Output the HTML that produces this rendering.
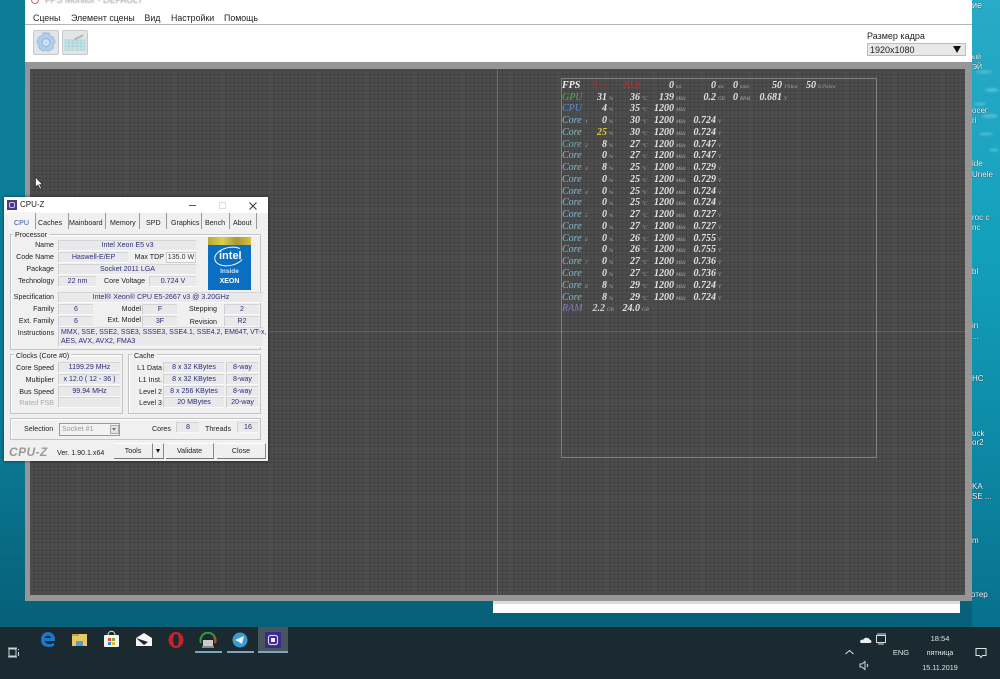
<!DOCTYPE html>
<html lang="ru"><head><meta charset="utf-8"><title>FPS Monitor</title>
<style>
*{box-sizing:border-box}
html,body{margin:0;padding:0}
body{width:1000px;height:679px;position:relative;overflow:hidden;font-family:"Liberation Sans","Noto Sans CJK SC",sans-serif;background:linear-gradient(180deg,#0d7d97 0%,#0b7f9a 60%,#075f78 92%)}
div,span{position:absolute;white-space:nowrap}
#rstrip{left:972px;top:0;width:28px;height:627px;background:linear-gradient(180deg,#27abc6 0,#1fa6c2 20%,#12a0bb 40%,#0d8aa6 70%,#08708c 100%)}
.dt{color:#fff;font-size:9px;left:972px;line-height:10px;text-shadow:0 0 1px #000;filter:blur(.3px)}
#win{left:25px;top:0;width:947px;height:69px;background:#fff}
#gray{left:25px;top:62px;width:947px;height:539px;background:#969696}
#canvas{left:30px;top:69px;width:935px;height:526px;background-color:#4d4d4d;background-image:
repeating-linear-gradient(90deg,rgba(255,255,255,.04) 0 1px,transparent 1px 48px),
repeating-linear-gradient(0deg,rgba(255,255,255,.035) 0 1px,transparent 1px 48px),
repeating-linear-gradient(90deg,rgba(0,0,0,.1) 0 1px,transparent 1px 4px),
repeating-linear-gradient(0deg,rgba(0,0,0,.1) 0 1px,transparent 1px 4px)}
.menu{top:13px;font-size:8.8px;color:#222;line-height:11px;filter:blur(.2px)}
.ol{left:0;top:0;filter:blur(.35px);font-family:"Liberation Serif",serif;font-style:italic;font-weight:bold;font-size:10px;line-height:12px;color:#e2e2e2}
.r{left:0;width:1000px;height:12px}
.r span{top:0}
.r i{font-size:5px;color:#aaa;font-style:italic;font-weight:normal;letter-spacing:0;margin-left:1px;vertical-align:baseline}
.a{left:562px;color:#86bad0;font-weight:normal}
.p{right:393px}.t{right:360px}.f{right:326px}.v{right:284px}
.pu{left:608px}.tu{left:641px}.fu{left:675px}.vu{left:717px}
#cz{left:4px;top:197px;width:264px;height:264px;background:#f0f0f0;box-shadow:0 0 3px rgba(0,0,0,.6);font-size:7.1px;color:#222;line-height:10px;filter:blur(.28px)}
#cz .tb{left:0;top:0;width:264px;height:16px;background:#fff}
.L{text-align:right}
.F{background:#e9e9ec;border-top:1px solid #d5d5d8;border-left:1px solid #cfcfd2;border-bottom:1px solid #fafafa;color:#2c2c78;text-align:center;height:11px;line-height:9px}
.G{border:1px solid #c4c4c4;box-shadow:inset 1px 1px 0 #fff}
.GL{background:#f0f0f0;padding:0 2px;line-height:9px}
.sep{top:16px;width:1px;height:16px;background:#9a9a9a}
.B{background:#efefef;border-bottom:1px solid #777;border-right:1px solid #888;border-top:1px solid #fff;top:246px;height:16px;text-align:center;line-height:14px}
.tk{filter:blur(.25px)}
.tray{color:#dfe5e6;font-size:7.5px;line-height:9px;text-align:center;filter:blur(.25px)}
</style></head><body>
<div id="rstrip"></div>
<svg style="position:absolute;left:972px;top:60px;filter:blur(1px)" width="28" height="110"><g fill="#7fd8e8" opacity=".5"><ellipse cx="12" cy="12" rx="8" ry="1.5"/><ellipse cx="20" cy="30" rx="7" ry="2"/><ellipse cx="8" cy="44" rx="6" ry="1.5"/><ellipse cx="18" cy="56" rx="8" ry="2"/><ellipse cx="14" cy="74" rx="7" ry="1.5"/><ellipse cx="22" cy="90" rx="5" ry="1.5"/></g></svg>
<div class="dt" style="top:0">ие</div>
<div class="dt" style="top:53px;font-size:7px">ый</div>
<div class="dt" style="top:63px;font-size:7px">ЭЙ</div>
<div class="dt" style="top:106px;font-size:8px">осег</div>
<div class="dt" style="top:116px;font-size:8px">ri</div>
<div class="dt" style="top:159px;font-size:8px">ide</div>
<div class="dt" style="top:170px;font-size:8px">Unele</div>
<div class="dt" style="top:213px;font-size:8px">roc c</div>
<div class="dt" style="top:223px;font-size:8px">nc</div>
<div class="dt" style="top:267px;font-size:8px">bl</div>
<div class="dt" style="top:321px;font-size:8px">in</div>
<div class="dt" style="top:332px;font-size:8px">...</div>
<div class="dt" style="top:374px;font-size:8px">HC</div>
<div class="dt" style="top:429px;font-size:8px">uck</div>
<div class="dt" style="top:438px;font-size:8px">or2</div>
<div class="dt" style="top:482px;font-size:8px">KA</div>
<div class="dt" style="top:492px;font-size:8px">SE ...</div>
<div class="dt" style="top:536px;font-size:8px">m</div>
<div class="dt" style="top:590px;left:971px;font-size:8px">отер</div>

<div style="left:493px;top:601px;width:467px;height:12px;background:#fff"></div>
<div style="left:493px;top:601px;width:467px;height:3px;background:#dcdcdc"></div>

<div id="win"></div>
<div style="left:45px;top:-5px;font-size:9px;color:#999;line-height:11px;filter:blur(.4px)">FPS Monitor - DEFAULT</div>
<div style="left:31px;top:-4px;width:8px;height:8px;border-radius:50%;border:1.5px solid #c66"></div>
<div class="menu" style="left:33px">Сцены</div>
<div class="menu" style="left:71px">Элемент сцены</div>
<div class="menu" style="left:144.500px">Вид</div>
<div class="menu" style="left:171px">Настройки</div>
<div class="menu" style="left:224px">Помощь</div>
<div style="left:25px;top:24px;width:947px;height:1px;background:#b5b5b5"></div>
<div style="left:33px;top:30px;width:26px;height:25px;background:#e3e6e8;border:1px solid #c6c9cc;border-radius:2px"></div>
<svg style="position:absolute;left:36px;top:32px;filter:blur(.4px)" width="20" height="21" viewBox="0 0 20 21"><path d="M7 1h6l1 3 3 1 2 5-2 3 0 3-4 3-3-1-3 1-4-3 0-3-2-3 2-5 3-1z" fill="#b4d0f0" stroke="#8fb3dd"/><circle cx="10" cy="10.500" r="4" fill="#dbe9f8" stroke="#7fa4d0"/><circle cx="10" cy="10.500" r="1.300" fill="#a9c9ee"/></svg>
<div style="left:62px;top:30px;width:26px;height:25px;background:#e3e6e8;border:1px solid #c6c9cc;border-radius:2px"></div>
<svg style="position:absolute;left:64px;top:34px;filter:blur(.4px)" width="22" height="17" viewBox="0 0 22 17"><rect x="1" y="6" width="20" height="10" fill="#c8e8ea" stroke="#a8d2d4"/><path d="M2 9h18M2 12h18M5 6v10M9 6v10M13 6v10M17 6v10" stroke="#9cc8cc" stroke-width=".7"/><path d="M11 6C12 3 16 4 19 1" stroke="#888" fill="none"/></svg>
<div style="left:867px;top:31px;font-size:9px;color:#222;line-height:11px;filter:blur(.2px)">Размер кадра</div>
<div style="left:867px;top:43px;width:99px;height:13px;background:#e8e8e8;border:1px solid #bdbdbd"></div>
<div style="left:870px;top:44px;font-size:9px;color:#222;line-height:12px;filter:blur(.2px)">1920x1080</div>
<div style="left:953px;top:46px;width:0;height:0;border-left:4.500px solid transparent;border-right:4.500px solid transparent;border-top:7px solid #111"></div>

<div id="gray"></div>
<div id="canvas"></div>
<div style="left:497px;top:69px;width:1px;height:526px;background:#6e6e6e"></div>
<div style="left:30px;top:331px;width:935px;height:1px;background:#626262"></div>
<div style="left:561px;top:78px;width:316px;height:380px;border:1px solid #808080"></div>

<div class="ol">
<div class="r" style="top:79.500px"><span style="left:562px;color:#eee">FPS</span><span class="p" style="color:#b02828">0<i style="color:#932">FPS</i></span><span class="t" style="color:#b03030">20.0<i style="color:#932;position:absolute;left:100%;top:0">ms</i></span><span class="f">0</span><span class="fu"><i>ms</i></span><span class="v">0</span><span class="vu"><i>ms</i></span><span style="right:262px">0</span><span style="left:739px"><i>msec</i></span><span style="right:218px">50</span><span style="left:783px"><i>1%low</i></span><span style="right:184px">50</span><span style="left:817px"><i>0.1%low</i></span></div>
<div class="r" style="top:91.500px"><span class="a" style="color:#4cb050">GPU</span><span class="p">31</span><span class="pu"><i>%</i></span><span class="t">36</span><span class="tu"><i>°C</i></span><span class="f">139</span><span class="fu"><i>MHz</i></span><span class="v">0.2</span><span class="vu"><i>GB</i></span><span style="right:262px">0</span><span style="left:739px"><i>RPM</i></span><span style="right:218px">0.681</span><span style="left:783px"><i>V</i></span></div>
<div class="r" style="top:103px"><span class="a" style="color:#5a8ed0">CPU</span><span class="p">4</span><span class="pu"><i>%</i></span><span class="t">35</span><span class="tu"><i>°C</i></span><span class="f">1200</span><span class="fu"><i>MHz</i></span></div>
<div class="r" style="top:115px"><span class="a">Core <i>1</i></span><span class="p">0</span><span class="pu"><i>%</i></span><span class="t">30</span><span class="tu"><i>°C</i></span><span class="f">1200</span><span class="fu"><i>MHz</i></span><span class="v">0.724</span><span class="vu"><i>V</i></span></div>
<div class="r" style="top:127px"><span class="a" style="color:#8ac0b8">Core</span><span class="p" style="color:#d8c838">25</span><span class="pu"><i>%</i></span><span class="t">30</span><span class="tu"><i>°C</i></span><span class="f">1200</span><span class="fu"><i>MHz</i></span><span class="v">0.724</span><span class="vu"><i>V</i></span></div>
<div class="r" style="top:138.500px"><span class="a" style="color:#6cb0a8">Core <i>2</i></span><span class="p">8</span><span class="pu"><i>%</i></span><span class="t">27</span><span class="tu"><i>°C</i></span><span class="f">1200</span><span class="fu"><i>MHz</i></span><span class="v">0.747</span><span class="vu"><i>V</i></span></div>
<div class="r" style="top:150px"><span class="a">Core</span><span class="p">0</span><span class="pu"><i>%</i></span><span class="t">27</span><span class="tu"><i>°C</i></span><span class="f">1200</span><span class="fu"><i>MHz</i></span><span class="v">0.747</span><span class="vu"><i>V</i></span></div>
<div class="r" style="top:162px"><span class="a">Core <i>3</i></span><span class="p">8</span><span class="pu"><i>%</i></span><span class="t">25</span><span class="tu"><i>°C</i></span><span class="f">1200</span><span class="fu"><i>MHz</i></span><span class="v">0.729</span><span class="vu"><i>V</i></span></div>
<div class="r" style="top:173.500px"><span class="a">Core</span><span class="p">0</span><span class="pu"><i>%</i></span><span class="t">25</span><span class="tu"><i>°C</i></span><span class="f">1200</span><span class="fu"><i>MHz</i></span><span class="v">0.729</span><span class="vu"><i>V</i></span></div>
<div class="r" style="top:185.500px"><span class="a">Core <i>4</i></span><span class="p">0</span><span class="pu"><i>%</i></span><span class="t">25</span><span class="tu"><i>°C</i></span><span class="f">1200</span><span class="fu"><i>MHz</i></span><span class="v">0.724</span><span class="vu"><i>V</i></span></div>
<div class="r" style="top:197px"><span class="a">Core</span><span class="p">0</span><span class="pu"><i>%</i></span><span class="t">25</span><span class="tu"><i>°C</i></span><span class="f">1200</span><span class="fu"><i>MHz</i></span><span class="v">0.724</span><span class="vu"><i>V</i></span></div>
<div class="r" style="top:209px"><span class="a">Core <i>5</i></span><span class="p">0</span><span class="pu"><i>%</i></span><span class="t">27</span><span class="tu"><i>°C</i></span><span class="f">1200</span><span class="fu"><i>MHz</i></span><span class="v">0.727</span><span class="vu"><i>V</i></span></div>
<div class="r" style="top:220.500px"><span class="a">Core</span><span class="p">0</span><span class="pu"><i>%</i></span><span class="t">27</span><span class="tu"><i>°C</i></span><span class="f">1200</span><span class="fu"><i>MHz</i></span><span class="v">0.727</span><span class="vu"><i>V</i></span></div>
<div class="r" style="top:232.500px"><span class="a">Core <i>6</i></span><span class="p">0</span><span class="pu"><i>%</i></span><span class="t">26</span><span class="tu"><i>°C</i></span><span class="f">1200</span><span class="fu"><i>MHz</i></span><span class="v">0.755</span><span class="vu"><i>V</i></span></div>
<div class="r" style="top:244px"><span class="a">Core</span><span class="p">0</span><span class="pu"><i>%</i></span><span class="t">26</span><span class="tu"><i>°C</i></span><span class="f">1200</span><span class="fu"><i>MHz</i></span><span class="v">0.755</span><span class="vu"><i>V</i></span></div>
<div class="r" style="top:256px"><span class="a">Core <i>7</i></span><span class="p">0</span><span class="pu"><i>%</i></span><span class="t">27</span><span class="tu"><i>°C</i></span><span class="f">1200</span><span class="fu"><i>MHz</i></span><span class="v">0.736</span><span class="vu"><i>V</i></span></div>
<div class="r" style="top:267.500px"><span class="a">Core</span><span class="p">0</span><span class="pu"><i>%</i></span><span class="t">27</span><span class="tu"><i>°C</i></span><span class="f">1200</span><span class="fu"><i>MHz</i></span><span class="v">0.736</span><span class="vu"><i>V</i></span></div>
<div class="r" style="top:279.500px"><span class="a">Core <i>8</i></span><span class="p">8</span><span class="pu"><i>%</i></span><span class="t">29</span><span class="tu"><i>°C</i></span><span class="f">1200</span><span class="fu"><i>MHz</i></span><span class="v">0.724</span><span class="vu"><i>V</i></span></div>
<div class="r" style="top:291.500px"><span class="a">Core</span><span class="p">8</span><span class="pu"><i>%</i></span><span class="t">29</span><span class="tu"><i>°C</i></span><span class="f">1200</span><span class="fu"><i>MHz</i></span><span class="v">0.724</span><span class="vu"><i>V</i></span></div>
<div class="r" style="top:303px"><span class="a" style="color:#8878b8">RAM</span><span style="right:395px;color:#ccc">2.2</span><span style="left:606px"><i>GB</i></span><span class="t">24.0</span><span class="tu"><i>GB</i></span></div>
</div>

<svg style="position:absolute;left:34px;top:176px" width="11" height="14" viewBox="0 0 11 14"><path d="M1.500 1v10l2.500-2 2 4 1.500-.8-2-3.700h3z" fill="#fff" stroke="#222" stroke-width=".6"/></svg>

<div id="cz">
<div class="tb"></div>
<div style="left:3px;top:3px;width:10px;height:10px;background:#4a3a8c"></div>
<div style="left:5px;top:5px;width:6px;height:6px;border:1px solid #cbbfe8;border-radius:2px"></div>
<div style="left:16px;top:3px;font-size:8px;line-height:10px">CPU-Z</div>
<div style="left:185px;top:8px;width:7px;height:1px;background:#555"></div>
<div style="left:215px;top:5px;width:7px;height:7px;border:1px solid #ddd"></div>
<svg style="position:absolute;left:245px;top:5px" width="8" height="8"><path d="M.5.5l7 7M7.500.5l-7 7" stroke="#333"/></svg>

<div style="left:2px;top:16px;width:260px;height:18px;background:#f0f0f0"></div>
<div style="left:4px;top:15px;width:28px;height:18px;background:#f4f4f4"></div>
<div style="left:10px;top:21px;color:#2d4fa0">CPU</div>
<div style="left:34px;top:21px;">Caches</div>
<div style="left:65px;top:21px;">Mainboard</div>
<div style="left:106px;top:21px;">Memory</div>
<div style="left:142px;top:21px;">SPD</div>
<div style="left:167px;top:21px;">Graphics</div>
<div style="left:201px;top:21px;">Bench</div>
<div style="left:229px;top:21px;">About</div>
<div class="sep" style="left:31px"></div><div class="sep" style="left:64px"></div><div class="sep" style="left:101px"></div><div class="sep" style="left:135px"></div><div class="sep" style="left:162px"></div><div class="sep" style="left:197px"></div><div class="sep" style="left:225px"></div><div class="sep" style="left:252px"></div>

<div class="G" style="left:6px;top:37px;width:251px;height:116px"></div>
<div class="GL" style="left:9px;top:34px">Processor</div>
<div class="L" style="right:214px;top:43px">Name</div><div class="F" style="left:54px;top:43px;width:138px">Intel Xeon E5 v3</div>
<div class="L" style="right:214px;top:55px">Code Name</div><div class="F" style="left:54px;top:55px;width:70px">Haswell-E/EP</div>
<div class="L" style="left:130px;top:55px;width:30px">Max TDP</div><div class="F" style="left:162px;top:55px;width:30px;background:#f7f7f7;border:1px solid #ccc;color:#333">135.0 W</div>
<div class="L" style="right:214px;top:67px">Package</div><div class="F" style="left:54px;top:67px;width:138px">Socket 2011 LGA</div>
<div class="L" style="right:214px;top:79px">Technology</div><div class="F" style="left:54px;top:79px;width:38px">22 nm</div>
<div style="left:100px;top:79px">Core Voltage</div><div class="F" style="left:145px;top:79px;width:47px">0.724 V</div>

<div style="left:204px;top:40px;width:43px;height:53px;background:#0a6fc2"></div>
<div style="left:204px;top:40px;width:43px;height:8px;background:linear-gradient(90deg,#b8a838,#e0cc50,#a89838,#d8c040)"></div>
<div style="left:210px;top:50px;width:31px;height:19px;border:1.500px solid #fff;border-radius:50%;transform:rotate(-12deg);border-right-color:transparent"></div>
<div style="left:215px;top:53px;color:#fff;font-size:11px;line-height:13px;font-weight:bold">intel</div>
<div style="left:204px;top:71px;width:43px;text-align:center;color:#cfe4f6;font-size:6.500px;line-height:8px;font-weight:bold">Inside</div>
<div style="left:204px;top:81px;width:43px;text-align:center;color:#fff;font-size:7px;line-height:8px;font-weight:bold">XEON</div>

<div class="L" style="right:214px;top:95px">Specification</div><div class="F" style="left:54px;top:95px;width:205px">Intel® Xeon® CPU E5-2667 v3 @ 3.20GHz</div>
<div class="L" style="right:214px;top:107px">Family</div><div class="F" style="left:54px;top:107px;width:35px">6</div>
<div class="L" style="right:127px;top:107px">Model</div><div class="F" style="left:138px;top:107px;width:35px">F</div>
<div class="L" style="right:51px;top:107px">Stepping</div><div class="F" style="left:220px;top:107px;width:35px">2</div>
<div class="L" style="right:214px;top:119px">Ext. Family</div><div class="F" style="left:54px;top:119px;width:35px">6</div>
<div class="L" style="right:127px;top:118px">Ext. Model</div><div class="F" style="left:138px;top:119px;width:35px">3F</div>
<div class="L" style="right:51px;top:120px">Revision</div><div class="F" style="left:220px;top:119px;width:35px">R2</div>
<div class="L" style="right:214px;top:131px">Instructions</div>
<div class="F" style="left:54px;top:130px;width:205px;height:20px;text-align:left;padding-left:2px;line-height:9px;font-size:7px">MMX, SSE, SSE2, SSE3, SSSE3, SSE4.1, SSE4.2, EM64T, VT-x,<br>AES, AVX, AVX2, FMA3</div>

<div class="G" style="left:6px;top:157px;width:113px;height:60px"></div>
<div class="GL" style="left:10px;top:155px">Clocks (Core #0)</div>
<div class="L" style="right:214px;top:166px">Core Speed</div><div class="F" style="left:54px;top:165px;width:62px">1199.29 MHz</div>
<div class="L" style="right:214px;top:178px">Multiplier</div><div class="F" style="left:54px;top:177px;width:62px">x 12.0 ( 12 - 36 )</div>
<div class="L" style="right:214px;top:190px">Bus Speed</div><div class="F" style="left:54px;top:189px;width:62px">99.94 MHz</div>
<div class="L" style="right:214px;top:201px;color:#aaa">Rated FSB</div><div class="F" style="left:54px;top:200px;width:62px"></div>

<div class="G" style="left:124px;top:157px;width:133px;height:60px"></div>
<div class="GL" style="left:128px;top:155px">Cache</div>
<div class="L" style="right:106px;top:166px">L1 Data</div><div class="F" style="left:159px;top:165px;width:61px">8 x 32 KBytes</div><div class="F" style="left:222px;top:165px;width:32px">8-way</div>
<div class="L" style="right:106px;top:178px">L1 Inst.</div><div class="F" style="left:159px;top:177px;width:61px">8 x 32 KBytes</div><div class="F" style="left:222px;top:177px;width:32px">8-way</div>
<div class="L" style="right:106px;top:190px">Level 2</div><div class="F" style="left:159px;top:189px;width:61px">8 x 256 KBytes</div><div class="F" style="left:222px;top:189px;width:32px">8-way</div>
<div class="L" style="right:106px;top:201px">Level 3</div><div class="F" style="left:159px;top:200px;width:61px">20 MBytes</div><div class="F" style="left:222px;top:200px;width:32px">20-way</div>

<div class="G" style="left:6px;top:221px;width:251px;height:22px"></div>
<div style="left:20px;top:227px">Selection</div>
<div style="left:55px;top:226px;width:61px;height:13px;background:#f2f2f2;border:1px solid #999;color:#999;padding-left:2px;line-height:11px">Socket #1</div>
<div style="left:106px;top:228px;width:9px;height:9px;background:#e4e4e4;border:1px solid #aaa"></div>
<div style="left:108px;top:231px;width:0;height:0;border-left:2.500px solid transparent;border-right:2.500px solid transparent;border-top:3px solid #777"></div>
<div style="left:148px;top:227px">Cores</div><div class="F" style="left:172px;top:225px;width:23px">8</div>
<div style="left:201px;top:227px">Threads</div><div class="F" style="left:233px;top:225px;width:21px">16</div>

<div style="left:5px;top:248px;font-size:12px;line-height:14px;font-style:italic;font-weight:bold;color:#9a9a9a;letter-spacing:.4px">CPU-Z</div>
<div style="left:53px;top:251px">Ver. 1.90.1.x64</div>
<div class="B" style="left:110px;width:39px">Tools</div>
<div class="B" style="left:149px;width:11px"></div>
<div style="left:152px;top:252px;width:0;height:0;border-left:2.500px solid transparent;border-right:2.500px solid transparent;border-top:4px solid #111"></div>
<div class="B" style="left:162px;width:48px">Validate</div>
<div class="B" style="left:213px;width:49px">Close</div>
</div>

<div style="left:0;top:627px;width:1000px;height:52px;background:#1a2a30"></div>
<div style="left:258px;top:627px;width:30px;height:25px;background:#46565c"></div>
<div style="left:195px;top:651px;width:27px;height:2px;background:#7ba4bf"></div>
<div style="left:227px;top:651px;width:27px;height:2px;background:#7ba4bf"></div>
<div style="left:258px;top:651px;width:30px;height:2px;background:#7ba4bf"></div>
<svg style="position:absolute;left:0;top:627px;filter:blur(.3px)" width="300" height="52" viewBox="0 627 300 52">
<path d="M41 640c0-5 3-8 7-8 4 0 7 3 7 7v2H45c0 3 4 4 9 2v3c-6 2-13 1-13-6zM45 638h6c0-3-6-3-6 0z" fill="#1a78c8"/>
<rect x="72" y="634" width="15" height="12" fill="#e8c860"/><rect x="72" y="634" width="7" height="2" fill="#c8a040"/><rect x="76" y="641" width="7" height="5" fill="#5a9ac8"/>
<rect x="104" y="635" width="15" height="12" rx="1" fill="#f5f5f5"/><path d="M108 635c0-5 7-5 7 0" fill="none" stroke="#ddd"/><rect x="108" y="638" width="3" height="3" fill="#e0502a"/><rect x="112" y="638" width="3" height="3" fill="#7ab030"/><rect x="108" y="642" width="3" height="3" fill="#2a90d8"/><rect x="112" y="642" width="3" height="3" fill="#e8b820"/>
<path d="M136 638l8-5 8 5v8h-16z" fill="#f5f5f5"/><path d="M136 638l12 4-4 3z" fill="#1a2a30"/>
<ellipse cx="176" cy="640" rx="7.500" ry="8" fill="#c8222a"/><ellipse cx="176" cy="640" rx="3" ry="6" fill="#1a2a30"/>
<path d="M201 643a7.500 7.500 0 1 1 14 0" fill="none" stroke="#2aa040" stroke-width="2"/><path d="M214 637a7.500 7.500 0 0 1 1 6" fill="none" stroke="#d04030" stroke-width="2"/><rect x="203" y="640" width="10" height="6" fill="#ccc"/><rect x="202" y="646" width="12" height="2" fill="#888"/>
<circle cx="240" cy="640" r="7.500" fill="#3d9ad6"/><path d="M235 640l9-4-2 8-3-2z" fill="#e8f4fc"/>
<rect x="265" y="632" width="16" height="16" fill="#3a2a8c"/><rect x="268.500" y="635.500" width="9" height="9" rx="2" fill="none" stroke="#d8cff0" stroke-width="1.200"/><rect x="271" y="638" width="4" height="4" fill="#efeaff"/>
<rect x="9" y="649" width="7" height="7" fill="none" stroke="#cfd6d8"/><path d="M8 648h9M8 657h9M18.500 649v1M18.500 652v4" stroke="#cfd6d8" fill="none"/>
</svg>
<svg style="position:absolute;left:840px;top:630px;filter:blur(.25px)" width="160" height="45" viewBox="840 630 160 45">
<path d="M860 642c0-2 2-3 3-2 1-3 6-3 7 0 2 0 2 3 0 3h-9z" fill="#e8eef0"/>
<rect x="876.500" y="635.500" width="9" height="7" fill="none" stroke="#d5dcde"/><path d="M878 644h6M877 634h9" stroke="#d5dcde"/>
<path d="M845.500 654l4-3.500 4 3.500" fill="none" stroke="#dfe5e6"/>
<path d="M860 664h2l3-2.500v8L862 667h-2zM867 664c1 1 1 2 0 3" fill="none" stroke="#cfd6d8"/>
<path d="M976 648.500h10v7h-3.500l-1.500 2-1.500-2H976z" fill="none" stroke="#dfe5e6"/>
</svg>
<div class="tray" style="left:892px;top:648px;width:18px">ENG</div>
<div class="tray" style="left:915px;top:634px;width:50px">18:54</div>
<div class="tray" style="left:915px;top:649px;width:50px;font-size:7px">пятница</div>
<div class="tray" style="left:915px;top:663px;width:50px;font-size:7.200px">15.11.2019</div>
</body></html>
